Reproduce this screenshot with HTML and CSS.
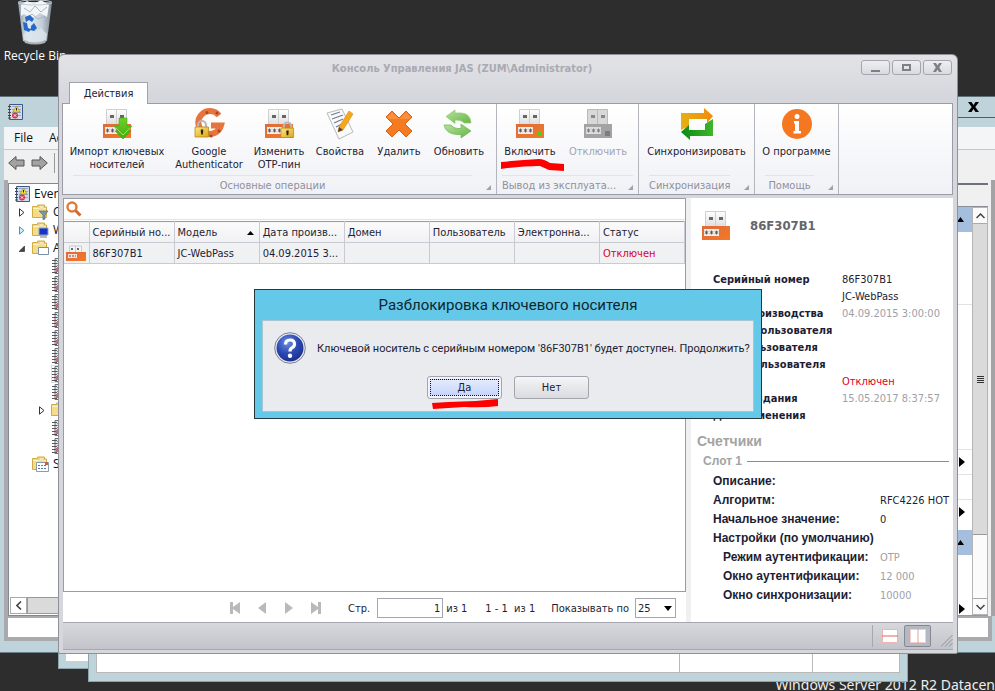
FILE: index.html
```html
<!DOCTYPE html>
<html lang="ru">
<head>
<meta charset="utf-8">
<title>Консоль Управления JAS</title>
<link rel="stylesheet" href="styles.css">
</head>
<body>
<svg class="defs" aria-hidden="true">
  <defs>
    <linearGradient id="gOrange" x1="0" y1="0" x2="1" y2="1"><stop offset="0" stop-color="#dd6a3c"/><stop offset="1" stop-color="#f47a26"/></linearGradient>
    <linearGradient id="gPlug" x1="0" y1="0" x2="0" y2="1"><stop offset="0" stop-color="#fff"/><stop offset="1" stop-color="#dcdcdc"/></linearGradient>
    <linearGradient id="gGold" x1="0" y1="0" x2="1" y2="1"><stop offset="0" stop-color="#ffe680"/><stop offset="1" stop-color="#dba51c"/></linearGradient>
    <linearGradient id="gGreen" x1="0" y1="0" x2="0" y2="1"><stop offset="0" stop-color="#6fd02a"/><stop offset="1" stop-color="#3fae0c"/></linearGradient>
    <linearGradient id="gSoft" x1="0" y1="0" x2="1" y2="1"><stop offset="0" stop-color="#b9e29c"/><stop offset="1" stop-color="#63b545"/></linearGradient>
    <linearGradient id="gYellow" x1="0" y1="0" x2="1" y2="0"><stop offset="0" stop-color="#e6b012"/><stop offset="1" stop-color="#f08a0c"/></linearGradient>
    <linearGradient id="gForest" x1="0" y1="0" x2="1" y2="0"><stop offset="0" stop-color="#0a8a10"/><stop offset="1" stop-color="#3fb52c"/></linearGradient>
    <radialGradient id="gBlue" cx=".4" cy=".3" r=".8"><stop offset="0" stop-color="#6f8fe4"/><stop offset=".5" stop-color="#2c49b4"/><stop offset="1" stop-color="#172a80"/></radialGradient>
    <linearGradient id="gBin" x1="0" y1="0" x2="1" y2="0"><stop offset="0" stop-color="#8e9ba5"/><stop offset=".3" stop-color="#dfe8ee"/><stop offset=".7" stop-color="#c3d0d9"/><stop offset="1" stop-color="#7d8a94"/></linearGradient>
  </defs>
  <symbol id="token" viewBox="0 0 32 32">
    <path d="M5.500 1.500h10v16h-10zM15.500 1.500h10v16h-10z" fill="url(#gPlug)" stroke="#cfcfcf"/>
    <path d="M9 7h4v3H9zM19 7h4v3h-4z" fill="#666"/>
    <path d="M2 16h28v14H2z" fill="url(#gOrange)"/>
    <path d="M4 19h15v7H4z" fill="#f3eeea"/>
    <path d="M6.500 20.500v4M4.800 21.500l3.400 2M4.800 23.500l3.400-2M11.500 20.500v4M9.800 21.500l3.400 2M9.800 23.500l3.400-2M16.500 20.500v4M14.800 21.500l3.400 2M14.800 23.500l3.400-2" stroke="#555" stroke-width=".9" fill="none"/>
  </symbol>
  <symbol id="padlock" viewBox="0 0 16 18">
    <path d="M4 9V5.500a4 4 0 0 1 8 0V9" fill="none" stroke="#b8b8b8" stroke-width="2.200"/>
    <path d="M1 7.500h13.500v10H1z" fill="url(#gGold)" stroke="#b8891b" stroke-width=".8"/>
    <path d="M6.800 10h2.400v2l-.4 3H7.200l-.4-3z" fill="#2a2205"/>
  </symbol>
  <symbol id="log" viewBox="0 0 16 16">
    <path d="M3 .5h12v15H3z" fill="#dfe9f4" stroke="#6b6f80"/>
    <path d="M5 3.500h9M5 5.500h9M5 7.500h9M5 9.500h9" stroke="#6c90bf"/>
    <path d="M0 2.500h5M0 5.500h5M0 8.500h5M0 11.500h5M0 14.500h5" stroke="#555"/>
    <path d="M4 10h6v4H4z" fill="#c9697a"/>
  </symbol>
  <symbol id="eventlog" viewBox="0 0 16 16">
    <path d="M2.500.5h13v15h-13z" fill="#cfdcea" stroke="#3f588a"/>
    <path d="M5 2.500h9M5 5.500h9M5 8.500h9M5 11.500h9" stroke="#8ea9cb"/>
    <path d="M1 2.500h3M1 5.500h3M1 8.500h3M1 11.500h3M1 14h3" stroke="#444"/>
    <path d="M9.500 2l3.500 6H6z" fill="#ffe02e" stroke="#9b8412" stroke-width=".6"/>
    <path d="M9.500 4v2.500" stroke="#222"/>
    <circle cx="8" cy="11.500" r="3" fill="#d5344d"/><path d="M6.800 10.300l2.400 2.400m0-2.400l-2.400 2.400" stroke="#fff"/>
  </symbol>
  <symbol id="folder" viewBox="0 0 16 16">
    <path d="M.5 2.500h5V1h7v2h2v10.500H.5z" fill="#f6dc86" stroke="#d0ac45"/>
    <path d="M1 4.500h13" stroke="#fdf3c4"/>
    <path d="M7 2h5v2H7z" fill="#fffbe6" stroke="#d0ac45" stroke-width=".5"/>
  </symbol>
</svg>

<main class="desktop">
  <div class="shortcut">
    <svg width="38" height="46" viewBox="0 0 38 46" aria-hidden="true">
      <path d="M2 2l5 39q12 5 24 0l5-39z" fill="url(#gBin)"/>
      <path d="M5 5l6-4 7 3 7-4 8 5-2 12-7-4-8 5-8-4-3 2z" fill="#f2f6f9"/>
      <path d="M8 8l6 4 5-6 6 6 6-5M11 17l5-3 6 5 8-3" stroke="#a9b6c1" fill="none"/>
      <path d="M7 35l5-6 6 4 7-5 6 6-1 6q-11 4-22 0z" fill="#dce5eb" opacity=".8"/>
      <path d="M9 17l5-2 4 4-2 3-3-2-3 2zM7 22l4 1 1 5 3 1-2 3-5-2zM15 26l3-3 3 5-3 3-4-1 1-2z" fill="#2668c9"/>
      <path d="M8 40q11 5 22 0l-1 3q-10 3-20 0z" fill="#aab0b4"/>
      <ellipse cx="19" cy="2.500" rx="17" ry="2.500" fill="none" stroke="#c4ccd2"/>
    </svg>
    <span>Recycle Bin</span>
  </div>
  <p class="edition">Windows Server 2012 R2 Datacen</p>

  <section class="viewer" aria-label="Event Viewer">
    <header class="viewer-title">
      <svg width="16" height="16"><use href="#eventlog"/></svg>
      <button class="viewer-close" aria-label="Close"><svg width="11" height="10" viewBox="0 0 11 10"><path d="M0 0h3.500l2 3 2-3H11L7.300 5l3.700 5H7.500l-2-3-2 3H0l3.700-5z"/></svg></button>
    </header>
    <nav class="viewer-menu"><a href="#">File</a><a href="#">Action</a></nav>
    <div class="viewer-tools">
      <button aria-label="Back"><svg width="17" height="16" viewBox="0 0 17 16"><path d="M.7 8L8 1.500V5h8v6H8v3.500z" fill="#a2a2a2" stroke="#555"/></svg></button>
      <button aria-label="Forward"><svg width="17" height="16" viewBox="0 0 17 16"><path d="M16.300 8L9 1.500V5H1v6h8v3.500z" fill="#a2a2a2" stroke="#555"/></svg></button>
      <span class="divider"></span>
    </div>
    <div class="viewer-body">
      <div class="tree-pane">
        <ul class="tree">
          <li class="root"><svg width="16" height="16"><use href="#eventlog"/></svg>Event</li>
          <li class="branch"><svg class="twist" width="6" height="9" viewBox="0 0 6 9"><path d="M.5.8v7.400L5 4.500z" fill="#fff" stroke="#333"/></svg><svg width="17" height="16" viewBox="0 0 17 16"><use href="#folder" width="16" height="16"/><path d="M7 7h9l-3 4v4l-2 1v-5z" fill="#7c95ad" stroke="#4c6680" stroke-width=".6"/></svg>C</li>
          <li class="branch"><svg class="twist" width="6" height="9" viewBox="0 0 6 9"><path d="M.5.8v7.400L5 4.500z" fill="#c9f0fb" stroke="#27a4cf"/></svg><svg width="17" height="16" viewBox="0 0 17 16"><use href="#folder" width="16" height="16"/><path d="M7 6h9v7H7z" fill="#1334c4" stroke="#8fa2cc"/><path d="M8 15h7" stroke="#777"/></svg>W</li>
          <li class="branch"><svg class="twist" width="6" height="9" viewBox="0 0 6 9"><path d="M5.500 2v5.500H0z" fill="#444" stroke="#222" stroke-width=".6"/></svg><svg width="17" height="16" viewBox="0 0 17 16"><use href="#folder" width="16" height="16"/><path d="M6.500 7.500h10v7h-10z" fill="#fff" stroke="#7a8fa8"/></svg>A</li>
          <li class="leaf"><svg width="16" height="16"><use href="#log"/></svg></li>
          <li class="leaf"><svg width="16" height="16"><use href="#log"/></svg></li>
          <li class="leaf"><svg width="16" height="16"><use href="#log"/></svg></li>
          <li class="leaf"><svg width="16" height="16"><use href="#log"/></svg></li>
          <li class="leaf"><svg width="16" height="16"><use href="#log"/></svg></li>
          <li class="leaf"><svg width="16" height="16"><use href="#log"/></svg></li>
          <li class="leaf picked"><svg width="16" height="16"><use href="#log"/></svg></li>
          <li class="leaf"><svg width="16" height="16"><use href="#log"/></svg></li>
          <li class="subfolder"><svg class="twist" width="6" height="9" viewBox="0 0 6 9"><path d="M.5.8v7.400L5 4.500z" fill="#fff" stroke="#333"/></svg><svg width="16" height="16"><use href="#folder"/></svg></li>
          <li class="leaf"><svg width="16" height="16"><use href="#log"/></svg></li>
          <li class="leaf"><svg width="16" height="16"><use href="#log"/></svg></li>
          <li class="branch last"><svg width="17" height="16" viewBox="0 0 17 16"><use href="#folder" width="16" height="16"/><path d="M4.500 6.500h12v9h-12z" fill="#fff" stroke="#8b9cb0"/><path d="M6 9.500h9M6 12.500h9" stroke="#567cae" stroke-dasharray="2 1"/><path d="M13 6h3v3h-3z" fill="#d25b4e"/></svg>S</li>
        </ul>
        <div class="hscroll">
          <button aria-label="Left"><svg width="6" height="9" viewBox="0 0 6 9"><path d="M5 .5l-4 4 4 4" fill="none" stroke="#444" stroke-width="1.600"/></svg></button>
          <span class="hthumb"></span>
        </div>
      </div>
      <aside class="actions">
        <div class="actions-head"></div>
        <div class="actions-main">
          <div class="actions-list">
            <div class="act-title"><svg width="7" height="5"><path d="M0 5l3.500-5L7 5z"/></svg></div>
            <div class="act-gap first"></div>
            <div class="act-gap second"></div>
            <div class="act-row"><svg width="6" height="10"><path d="M0 0l6 5-6 5z"/></svg></div>
            <div class="act-row"></div>
            <div class="act-row loose"><svg width="6" height="10"><path d="M0 0l6 5-6 5z"/></svg></div>
            <div class="act-title"><svg width="7" height="5"><path d="M0 5l3.500-5L7 5z"/></svg></div>
            <div class="act-end"><svg width="6" height="10"><path d="M0 0l6 5-6 5z"/></svg></div>
          </div>
          <div class="vscroll">
            <button aria-label="Up"><svg width="9" height="6" viewBox="0 0 9 6"><path d="M.5 5l4-4 4 4" fill="none" stroke="#444" stroke-width="1.500"/></svg></button>
            <span class="vthumb"><i></i><i></i><i></i><i></i></span>
            <button aria-label="Down"><svg width="9" height="6" viewBox="0 0 9 6"><path d="M.5 1l4 4 4-4" fill="none" stroke="#444" stroke-width="1.500"/></svg></button>
          </div>
        </div>
      </aside>
    </div>
    <footer class="viewer-foot"></footer>
  </section>

  <div class="under under-back"><div></div></div>
  <div class="under under-front"><div></div><div></div><div></div></div>

  <section class="console" aria-label="Консоль Управления JAS">
    <header class="titlebar">
      <h1>Консоль Управления JAS (ZUM\Administrator)</h1>
      <div class="winbuttons">
        <button aria-label="Свернуть"><svg width="11" height="9"><path d="M1 7h9v2H1z"/></svg></button>
        <button aria-label="Развернуть"><svg width="11" height="9"><path fill-rule="evenodd" d="M1 1h9v7H1zM3 3v3h5V3z"/></svg></button>
        <button aria-label="Закрыть"><svg width="11" height="9"><path d="M1 0h3l1.500 2.500L7 0h3L7.200 4.500 10 9H7L5.500 6.500 4 9H1l2.800-4.500z"/></svg></button>
      </div>
    </header>
    <div class="tabs"><button class="tab">Действия</button></div>

    <div class="ribbon">
      <section class="group main-ops">
        <div class="tools">
          <button><svg width="32" height="32" viewBox="0 0 32 32"><use href="#token" width="32" height="32"/><path d="M18 10h8v8h5l-4 5h3l-8 8-8-8h3l-4-5h5z" fill="url(#gGreen)" stroke="#48a81c" stroke-width=".6"/><path d="M15 20l7 7 7-7" fill="none" stroke="#9be05e"/></svg>Импорт ключевых<br>носителей</button>
          <button><svg width="32" height="32" viewBox="0 0 32 32"><path d="M26 7.500A11.500 11.500 0 1 0 28 17.500H18" fill="none" stroke="#e8743d" stroke-width="6"/><g fill="#a8481f"><circle cx="24" cy="5" r="1.500"/><circle cx="14" cy="4.500" r="1.500"/><circle cx="18" cy="28" r="1.500"/><circle cx="26" cy="23" r="1.500"/></g><use href="#padlock" x="1" y="11" width="16" height="19"/></svg>Google<br>Authenticator</button>
          <button><svg width="32" height="32" viewBox="0 0 32 32"><use href="#token" width="32" height="32"/><use href="#padlock" x="17" y="12" width="15" height="19"/></svg>Изменить<br>ОТР-пин</button>
          <button><svg width="32" height="32" viewBox="0 0 32 32"><path d="M3 5l15-4 11 23-14 7z" fill="#fafafa" stroke="#b9b9b9"/><path d="M7 7l9-3M8 11l11-4M10 15l9-4M12 19l6-3" stroke="#717b94" stroke-width="1.300"/><path d="M25 3l4 3-10 16-5 2 1-5z" fill="#f5a81c" stroke="#d88a10" stroke-width=".6"/><path d="M14 24l1-5 4 3z" fill="#504040"/></svg>Свойства</button>
          <button><svg width="32" height="32" viewBox="0 0 32 32"><path d="M9 3l7 7 7-7 6 6-7 7 7 7-6 6-7-7-7 7-6-6 7-7-7-7z" fill="#f57a20" stroke="#d9601a"/><path d="M9 4l7 7 7-7 5 5-2 2H6L4 9z" fill="#ffa35c" opacity=".5"/></svg>Удалить</button>
          <button><svg width="32" height="32" viewBox="0 0 32 32"><path d="M3 8.500L12 2v3h6q9 0 10 10h-7q-2-3-9-3v3.500z" fill="url(#gSoft)" stroke="#8cc873" stroke-width=".7"/><path d="M28 23L18 30v-3.500h-4Q3 26 1 17h7q3 4 10 3.500V16z" fill="url(#gSoft)" stroke="#6cb650" stroke-width=".7"/></svg>Обновить</button>
        </div>
        <h2>Основные операции</h2>
        <svg class="corner" width="5" height="5"><path d="M5 0v5H0z"/></svg>
      </section>
      <section class="group disable-ops">
        <div class="tools">
          <button><svg width="32" height="32" viewBox="0 0 32 32"><use href="#token" width="32" height="32"/><path d="M23 23h5v5h-5z" fill="#4cce1e"/></svg>Включить</button>
          <button class="off" disabled><svg width="32" height="32" viewBox="0 0 32 32"><path d="M5.500 1.500h10v16h-10zM15.500 1.500h10v16h-10z" fill="#d8d8d8" stroke="#bbb"/><path d="M9 7h4v3H9zM19 7h4v3h-4z" fill="#888"/><path d="M2 16h28v14H2z" fill="#a3a3a3"/><path d="M4 19h15v7H4z" fill="#dedede"/><path d="M6.500 20.500v4M4.800 21.500l3.400 2M4.800 23.500l3.400-2M11.500 20.500v4M9.800 21.500l3.400 2M9.800 23.500l3.400-2M16.500 20.500v4M14.800 21.500l3.400 2M14.800 23.500l3.400-2" stroke="#777" stroke-width=".9" fill="none"/><path d="M23 23h5v5h-5z" fill="#7d7d7d"/></svg>Отключить</button>
        </div>
        <h2>Вывод из эксплуата...</h2>
        <svg class="corner" width="5" height="5"><path d="M5 0v5H0z"/></svg>
      </section>
      <section class="group sync-ops">
        <div class="tools">
          <button><svg width="32" height="32" viewBox="0 0 32 32"><path d="M0 5h23V0l9 8-6 7v-4H8v7l-8 4z" fill="url(#gYellow)"/><path d="M32 11v17H9v4L0 24l8-7v5h16v-6z" fill="url(#gForest)"/></svg>Синхронизировать</button>
        </div>
        <h2>Синхронизация</h2>
        <svg class="corner" width="5" height="5"><path d="M5 0v5H0z"/></svg>
      </section>
      <section class="group help-ops">
        <div class="tools">
          <button><svg width="32" height="32" viewBox="0 0 32 32"><circle cx="16" cy="16" r="15" fill="#f47721"/><circle cx="16" cy="8.500" r="2.500" fill="#fff"/><path d="M13 13h5v10h2v2.500h-7.500V23h1.500v-7.500h-1z" fill="#fff"/></svg>О программе</button>
        </div>
        <h2>Помощь</h2>
        <svg class="corner" width="5" height="5"><path d="M5 0v5H0z"/></svg>
      </section>
    </div>

    <div class="workspace">
      <div class="list-pane">
        <div class="grid-box">
          <label class="search">
            <svg width="16" height="16" viewBox="0 0 16 16"><circle cx="6" cy="6" r="4.500" fill="none" stroke="#e07a3a" stroke-width="2.400"/><path d="M9.500 9.500l5 5" stroke="#d9692a" stroke-width="3"/></svg>
            <input type="text" aria-label="Поиск">
          </label>
          <table class="tokens">
            <colgroup><col class="icon-col"><col span="7"></colgroup>
            <thead>
              <tr><th></th><th>Серийный но...</th><th>Модель<svg class="sort" width="7" height="4"><path d="M0 4l3.500-4L7 4z"/></svg></th><th>Дата произв...</th><th>Домен</th><th>Пользователь</th><th>Электронна...</th><th>Статус</th></tr>
            </thead>
            <tbody>
              <tr><td class="icon-cell"><svg width="20" height="16" viewBox="0 0 20 16"><path d="M3.500 1h6v7h-6zM9.500 1h6v7h-6z" fill="#f5f5f5" stroke="#ccc"/><path d="M5 3h2v2H5zM11 3h2v2h-2z" fill="#666"/><path d="M0 7h20v9H0z" fill="url(#gOrange)"/><path d="M2 9h9v4H2z" fill="#f7e3d8"/><path d="M3 11h7" stroke="#745" stroke-dasharray="2 1"/></svg></td><td>86F307B1</td><td>JC-WebPass</td><td>04.09.2015 3...</td><td></td><td></td><td></td><td class="alert">Отключен</td></tr>
            </tbody>
          </table>
        </div>
        <div class="pager">
          <button aria-label="Первая"><svg width="11" height="12"><path d="M0 0h3v5l7-5v12L3 7v5H0z"/></svg></button>
          <button aria-label="Назад"><svg width="11" height="12"><path d="M9 0v12L1 6z"/></svg></button>
          <button aria-label="Вперёд"><svg width="11" height="12"><path d="M1 0v12l8-6z"/></svg></button>
          <button aria-label="Последняя"><svg width="11" height="12"><path d="M10 0H7v5L0 0v12l7-5v5h3z"/></svg></button>
          <label class="page-label" for="page">Стр.</label>
          <input id="page" type="text" value="1">
          <span class="total">из 1</span>
          <span class="range">1 - 1&nbsp; из 1</span>
          <label class="size-label" for="size">Показывать по</label>
          <span class="picker"><select id="size"><option>25</option></select><svg width="8" height="5"><path d="M0 0h8L4 5z"/></svg></span>
        </div>
      </div>

      <aside class="details">
        <div class="token-head">
          <svg width="32" height="32"><use href="#token"/></svg>
          <strong>86F307B1</strong>
        </div>
        <dl class="facts">
          <dt>Серийный номер</dt><dd>86F307B1</dd>
          <dt>Модель</dt><dd>JC-WebPass</dd>
          <dt>Дата производства</dt><dd class="dim">04.09.2015 3:00:00</dd>
          <dt>Домен пользователя</dt><dd></dd>
          <dt>Имя пользователя</dt><dd></dd>
          <dt>Email пользователя</dt><dd></dd>
          <dt>Статус</dt><dd class="alert">Отключен</dd>
          <dt>Дата создания</dt><dd class="dim">15.05.2017 8:37:57</dd>
          <dt>Дата изменения</dt><dd></dd>
        </dl>
        <h2>Счетчики</h2>
        <h3>Слот 1</h3>
        <dl class="slot">
          <dt>Описание:</dt><dd></dd>
          <dt>Алгоритм:</dt><dd>RFC4226 HOT</dd>
          <dt>Начальное значение:</dt><dd>0</dd>
          <dt>Настройки (по умолчанию)</dt><dd></dd>
          <dt class="nested">Режим аутентификации:</dt><dd class="dim">OTP</dd>
          <dt class="nested">Окно аутентификации:</dt><dd class="dim">12 000</dd>
          <dt class="nested">Окно синхронизации:</dt><dd class="dim">10000</dd>
        </dl>
      </aside>
    </div>

    <footer class="statusbar">
      <button aria-label="Строки"><svg width="16" height="14"><path d="M.5.5h15v13H.5z" fill="#fff" stroke="#f0b5b0"/><path d="M0 7h16" stroke="#e0685e"/></svg></button>
      <button class="pressed" aria-label="Столбцы"><svg width="16" height="14"><path d="M.5.5h15v13H.5z" fill="#fff" stroke="#f3cdc8"/><path d="M8 0v14" stroke="#e9a29a"/></svg></button>
      <svg class="grip" width="12" height="12"><path d="M0 11.500L11.500 0M4 11.500L11.500 4M8 11.500L11.500 8" stroke="#8f9098"/></svg>
    </footer>

    <svg class="mark mark-enable" width="63" height="14" viewBox="0 0 63 14"><path d="M0 3Q20 1 38 0q5 0 11 4l14 1v7l-15-1-9-4Q20 7 0 10z" fill="#f00"/></svg>

    <section class="dialog" role="dialog" aria-labelledby="ask">
      <h2 id="ask">Разблокировка ключевого носителя</h2>
      <div class="dialog-body">
        <div class="message">
          <svg width="32" height="32" viewBox="0 0 32 32"><circle cx="16" cy="16" r="15.300" fill="#e9ecf2" stroke="#777f93"/><circle cx="16" cy="16" r="13.500" fill="url(#gBlue)"/><path d="M11.500 12.500Q11.500 8 16 8t4.500 4q0 2.500-2.300 3.700T16 19.500" fill="none" stroke="#fff" stroke-width="3.200"/><circle cx="16" cy="23.800" r="2.200" fill="#fff"/></svg>
          <p>Ключевой носитель с серийным номером '86F307B1' будет доступен. Продолжить?</p>
        </div>
        <div class="answers"><button class="default"><span>Да</span></button><button><span>Нет</span></button></div>
      </div>
      <svg class="mark mark-yes" width="67" height="11" viewBox="0 0 67 11"><path d="M0 4l16-1q25 0 50-3v7q-14 2-34 1L1 10z" fill="#f00"/></svg>
    </section>
  </section>
</main>
</body>
</html>
```

FILE: styles.css
```css
* { box-sizing: border-box; }
body, h1, h2, h3, p, ul, dl, dd { margin: 0; padding: 0; }
ul { list-style: none; }
button, input, select { font: inherit; color: inherit; }
button { padding: 0; border: 0; background: none; }
svg { display: block; flex: none; }
.defs { position: absolute; width: 0; height: 0; }

body {
  font: 11px/13px "DejaVu Sans Condensed", "Noto Sans", sans-serif;
  color: #1d1d33;
}
.desktop {
  position: relative;
  height: 100vh;
  overflow: hidden;
  background: #2d2d2d;
}
.shortcut {
  position: absolute;
  left: 4px;
  top: 0;
  width: 62px;
  display: flex;
  flex-direction: column;
  align-items: center;
  gap: 2px;
  font: 12px/16px "Open Sans", sans-serif;
  color: #fff;
  white-space: nowrap;
}
.edition {
  position: absolute;
  right: 0;
  bottom: -4px;
  font: 14px/20px "Noto Sans", sans-serif;
  color: #eee;
  white-space: nowrap;
}

/* Event viewer behind the console */
.viewer {
  position: absolute;
  inset: 96px 0 38px 0;
  display: flex;
  flex-direction: column;
  padding: 0 4px 11px 4px;
  border-top: 1px solid #5f7078;
  border-bottom: 1px solid #6d8089;
  background: #bfd3da;
  font: 12px/16px "Open Sans", sans-serif;
  color: #111;
}
.viewer-title {
  display: flex;
  justify-content: space-between;
  height: 30px;
  padding: 7px 0 0 3px;
}
.viewer-close {
  width: 44px;
  height: 21px;
  margin: -7px -4px 0 0;
  border-bottom: 1px solid #4d5d65;
}
.viewer-close svg { margin: 0 auto; }
.viewer-menu {
  display: flex;
  gap: 16px;
  height: 23px;
  margin-right: -4px;
  padding: 3px 10px;
  background: #f4f5f6;
  border-bottom: 1px solid #c5c8ca;
}
.viewer-menu a { color: inherit; text-decoration: none; }
.viewer-tools {
  display: flex;
  align-items: center;
  gap: 6px;
  height: 30px;
  margin-right: -4px;
  padding: 0 4px 4px;
  background: #f0f0f0;
}
.divider { width: 1px; height: 20px; background: #999; }
.viewer-body {
  flex: 1;
  display: flex;
  justify-content: space-between;
  min-height: 0;
  padding: 3px 0 0 4px;
  margin-right: -4px;
  border-right: 4px solid #a3a3a5;
  background: linear-gradient(90deg, #a9aaad 4px, #f0f0f0 4px);
}
.tree-pane {
  display: flex;
  flex-direction: column;
  width: 90px;
  border: 1px solid #828790;
  background: #fff;
  overflow: hidden;
}
.tree { flex: 1; padding-top: 1px; }
.tree li { display: flex; align-items: center; height: 18px; white-space: nowrap; }
.tree .root { gap: 4px; padding-left: 5px; }
.tree .branch { padding-left: 10px; gap: 4px; }
.tree .branch .twist { margin-right: 3px; }
.tree .last { padding-left: 23px; }
.tree .leaf { padding-left: 43px; }
.tree .picked svg { outline: 1px solid #ddd; }
.tree .subfolder { gap: 6px; padding-left: 30px; }
.hscroll { display: flex; height: 19px; padding: 1px; }
.hscroll button {
  display: grid;
  place-items: center;
  width: 17px;
  border: 1px solid #aaa;
}
.hthumb { flex: 1; background: #dadada; border: 1px solid #999; }
.actions {
  display: flex;
  flex-direction: column;
  width: 45px;
  margin-right: 3px;
}
.actions-head {
  height: 24px;
  border-top: 2px solid #6d7180;
  border-bottom: 1px solid #8a8f96;
}
.actions-main { flex: 1; display: flex; background: #fff; border-bottom: 1px solid #999; }
.actions-list { flex: 1; display: flex; flex-direction: column; }
.act-title { height: 25px; padding: 10px 0 0 14px; background: #a3bfdd; }
.act-gap { border-bottom: 1px solid #e2e2e2; }
.first { height: 73px; }
.second { height: 145px; }
.act-row { height: 25px; padding: 7px 0 0 16px; border-bottom: 1px solid #e2e2e2; }
.act-row.loose { height: 30px; border: 0; }
.act-end { flex: 1; display: flex; align-items: flex-end; padding: 0 0 1px 16px; }
.vscroll { display: flex; flex-direction: column; justify-content: space-between; width: 16px; border: 1px solid #b5b5b5; background: #fbfbfb; }
.vscroll button { display: grid; place-items: center; height: 16px; border-bottom: 1px solid #aaa; }
.vscroll button:last-child { border-top: 1px solid #aaa; border-bottom: 0; }
.vthumb {
  display: flex;
  flex-direction: column;
  align-items: center;
  justify-content: center;
  gap: 1px;
  height: 311px;
  margin-bottom: auto;
  background: #dadada;
  border-bottom: 1px solid #999;
}
.vthumb i { width: 7px; height: 1px; background: #333; }
.viewer-foot { height: 25px; margin-right: -1px; border: 4px solid #a9aaad; border-width: 2px 4px 4px 4px; background: #fff; }

/* Windows peeking out under the console */
.under {
  position: absolute;
  display: flex;
  background: #bfd3da;
  border: 1px solid #8ea4ad;
}
.under > div { background: #fff; }
.under-back { left: 58px; right: 500px; bottom: 22px; height: 20px; padding: 0 7px 7px; }
.under-back > div { flex: 1; }
.under-front { left: 88px; right: 87px; bottom: 9px; height: 30px; padding: 0 7px 8px; }
.under-front > div { border: 1px solid #b9b9b9; border-width: 0 0 1px 1px; }
.under-front > div:first-child { flex: 1; }
.under-front > div:nth-child(2) { width: 133px; }
.under-front > div:last-child { width: 88px; border-right-width: 1px; }

/* Console window */
.console {
  position: absolute;
  inset: 54px 37px 37px 58px;
  display: flex;
  flex-direction: column;
  padding: 0 4px 3px;
  border: 1px solid #8f9098;
  border-radius: 6px 6px 2px 2px;
  background: linear-gradient(#e3e3e7, #d6d7dd 40px);
}
.titlebar { display: flex; height: 27px; padding-top: 5px; }
.titlebar h1 { flex: 1; padding-top: 2px; font-size: 11px; line-height: 13px; text-align: center; color: #a9aab3; }
.winbuttons { display: flex; gap: 2px; padding-right: 1px; }
.winbuttons button {
  display: grid;
  place-items: center;
  width: 29px;
  height: 15px;
  border: 1px solid #a4a5ae;
  border-radius: 3px;
  background: linear-gradient(#efeff2, #d9dae0);
}
.winbuttons svg { fill: #7e7f89; }
.tabs { padding-left: 6px; }
.tab {
  display: block;
  position: relative;
  z-index: 1;
  width: 79px;
  height: 22px;
  margin-bottom: -1px;
  border: 1px solid #a0a1aa;
  border-bottom: 0;
  background: #fff;
}
.ribbon {
  display: flex;
  height: 92px;
  margin-left: -1px;
  border: 1px solid #9b9ca6;
  background: linear-gradient(#fff, #f0f1f6);
}
.group { position: relative; display: flex; flex-direction: column; border-right: 1px solid #b4b5bd; }
.main-ops { width: 434px; }
.disable-ops { width: 142px; }
.sync-ops { width: 116px; }
.help-ops { width: 84px; }
.tools { flex: 1; display: grid; align-items: start; padding-top: 4px; }
.main-ops .tools { grid-template-columns: 108px 76px 64px 58px 60px 60px; }
.disable-ops .tools { grid-template-columns: 66px 70px; }
.tools button { text-align: center; white-space: nowrap; }
.tools svg { margin: 0 auto 5px; }
.tools .off { color: #a3a4ae; }
.group h2 {
  height: 19px;
  margin: 0 10px;
  padding-top: 3px;
  border-top: 1px solid #e2e3e8;
  font-size: 11px;
  font-weight: 400;
  text-align: center;
  white-space: nowrap;
  color: #8f909b;
}
.main-ops h2 { margin: 0 24px 0 10px; }
.disable-ops h2 { margin: 0 5px; text-align: left; }
.sync-ops h2, .help-ops h2 { margin-right: 24px; }
.corner { position: absolute; right: 5px; bottom: 4px; fill: #a0a1aa; }

.workspace { flex: 1; display: flex; min-height: 0; margin-top: 3px; background: #f0f0f3; }
.list-pane { flex: 1; display: flex; flex-direction: column; min-width: 0; background: #fff; }
.grid-box { flex: 1; border: 1px solid #9a9ba5; }
.search { display: flex; align-items: center; gap: 4px; height: 21px; padding-left: 2px; border-bottom: 1px solid #e4e4e8; }
.search input { flex: 1; height: 18px; border: 0; outline: 0; }
.tokens { width: 100%; margin-top: 1px; table-layout: fixed; border-collapse: collapse; border-top: 1px solid #9a9ba5; }
.icon-col { width: 25px; }
.tokens th, .tokens td {
  height: 21px;
  padding: 0 3px;
  border-right: 1px solid #cacbd2;
  border-bottom: 1px solid #cacbd2;
  font-weight: 400;
  text-align: left;
  white-space: nowrap;
}
.tokens th { background: linear-gradient(#fbfbfc, #f0f1f3); }
.tokens td { background: #f0f1f3; }
.tokens .sort { float: right; margin: 5px 2px 0 0; }
.tokens .icon-cell { padding: 2px; }
.alert { color: #e0001e; }
.pager { display: flex; align-items: center; height: 30px; padding: 2px 10px 0; justify-content: flex-end; white-space: nowrap; }
.pager button { width: 11px; margin-right: 16px; }
.pager button svg { fill: #b9b9b9; }
.page-label { margin: 0 7px 0 10px; }
.pager input { width: 66px; height: 20px; padding: 0 2px; border: 1px solid #a5a6ad; text-align: right; }
.total { margin-left: 3px; }
.range { margin: 0 16px 0 18px; }
.picker { display: flex; align-items: center; position: relative; margin-left: 6px; }
.picker select { appearance: none; width: 41px; height: 20px; padding: 0 2px; border: 1px solid #a5a6ad; border-radius: 0; background: #fff; }
.picker svg { position: absolute; right: 4px; pointer-events: none; }

.details { width: 262px; margin-left: 5px; padding: 12px 4px 0 6px; background: #fff; overflow: hidden; }
.token-head { display: flex; align-items: center; gap: 18px; padding-left: 3px; height: 32px; }
.token-head strong { font-size: 13px; line-height: 16px; color: #66666a; }
.facts, .slot { display: grid; white-space: nowrap; }
.facts { grid-template-columns: 129px 1fr; grid-auto-rows: 17px; padding: 29px 0 0 16px; line-height: 17px; }
.facts dt, .slot dt { font-weight: 700; }
.details .dim { color: #a0a0a8; }
.details h2 { margin-top: 8px; font: 700 14px/18px "Liberation Sans", sans-serif; color: #a3a3a3; }
.details h3 {
  display: flex;
  align-items: center;
  gap: 5px;
  padding-left: 6px;
  font: 700 12px/22px "Liberation Sans", sans-serif;
  color: #a3a3a3;
}
.details h3::after { content: ""; flex: 1; height: 1px; background: #8d8d8d; }
.slot { grid-template-columns: 167px 1fr; grid-auto-rows: 19px; padding-left: 16px; line-height: 19px; }
.slot dt { font-family: "Liberation Sans", sans-serif; font-size: 12px; }
.slot .nested { padding-left: 10px; }

.statusbar {
  display: flex;
  align-items: center;
  justify-content: flex-end;
  height: 28px;
  border: 1px solid #a6a7b0;
  border-width: 1px 0;
  background: linear-gradient(#d7d8dc, #c3c4cb);
}
.statusbar button { display: grid; place-items: center; width: 27px; height: 22px; margin-left: 4px; }
.statusbar button:first-child { border-left: 1px solid #a6a7b0; width: 28px; padding-left: 6px; }
.statusbar .pressed { border: 1px solid #858793; border-radius: 2px; background: #b5b7c3; }
.grip { margin: 10px 0 0 10px; }

.mark { position: absolute; pointer-events: none; }
.mark-enable { left: 442px; top: 104px; }
.mark-yes { left: 177px; bottom: 8px; }

.dialog {
  position: absolute;
  inset: 0;
  margin: auto;
  width: 508px;
  height: 130px;
  padding: 0 7px 7px;
  border: 1px solid #25393f;
  background: #64c8e8;
}
.dialog h2 { font: 15px/30px Roboto, sans-serif; color: #0c2730; text-align: center; }
.dialog-body { height: 92px; padding-top: 11px; background: #e9ebef; border: 1px solid #a8c6d2; }
.message { display: flex; align-items: center; gap: 11px; padding-left: 11px; white-space: nowrap; }
.message p { font-family: Roboto, sans-serif; }
.answers { display: flex; justify-content: center; gap: 12px; margin-top: 12px; }
.answers button {
  width: 75px;
  height: 23px;
  padding: 2px;
  border: 1px solid #a3a4ad;
  border-radius: 3px;
  background: linear-gradient(#f5f5f7, #dadbe0);
}
.answers span { display: block; line-height: 15px; border: 1px solid transparent; }
.answers .default { background: #f1f3f8; }
.answers .default span { border: 1px dotted #111; background: linear-gradient(#e3eafc, #c6d5fa); }
```
